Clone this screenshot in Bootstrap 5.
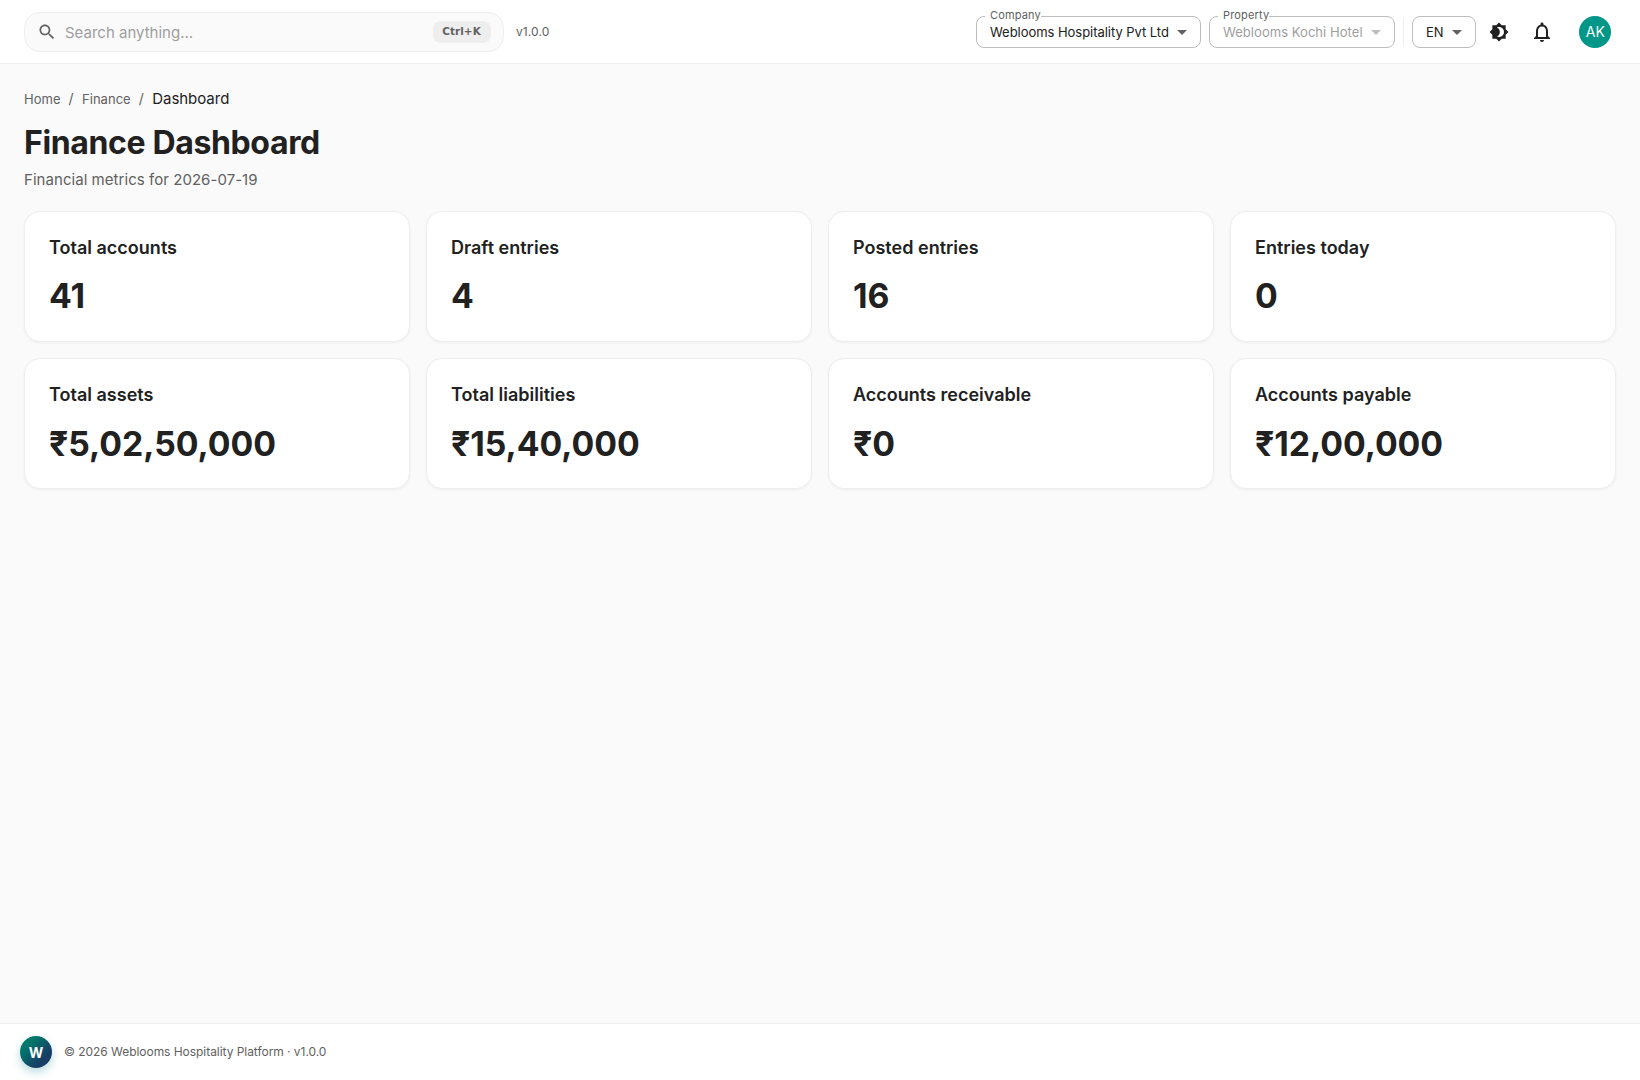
<!DOCTYPE html>
<html lang="en">
<head>
<meta charset="utf-8">
<meta name="viewport" content="width=device-width, initial-scale=1">
<title>Finance Dashboard</title>
<link rel="stylesheet" href="https://cdn.jsdelivr.net/npm/bootstrap@5.3.0/dist/css/bootstrap.min.css">
<style>
  body { font-family: Inter, sans-serif; background: #fafafa; color: #212121; font-size: 15px; }
  .topbar { height: 64px; border-bottom: 1px solid #eee; }
  .search-box { width: 480px; height: 40px; border: 1px solid #eee; border-radius: 16px; background: #fafafa; padding: 0 12px; }
  .search-input { font-size: 15px; line-height: 22px; padding-top: 2px; color: #9e9e9e; margin-left: 8px; }
  .search-box svg { fill: #616161; }
  .key-hint { font-family: "DejaVu Sans", sans-serif; font-size: 10.4px; letter-spacing: .1px; font-weight: 700; color: #616161; background: #eee; border-radius: 8px; width: 58px; height: 22px; line-height: 20px; padding-right: 1px; }
  .version-tag { font-size: 12px; letter-spacing: .1px; color: #616161; margin-left: 12px; }
  .select-field { height: 32px; border: 1px solid #bdbdbd; border-radius: 8px; padding: 0 10px 0 13px; font-size: 13px; color: #212121; }
  .select-field > span:not(.field-legend) { padding-top: 2px; }
  .select-field svg { fill: #616161; }
  .select-off { color: #9e9e9e; }
  .select-off svg { fill: #bdbdbd; }
  .field-legend { left: 8px; top: -10px; padding-left: 5px; height: 16px; line-height: 16px; font-size: 11px; letter-spacing: .15px; color: #616161; background: #fff; }
  .field-company { width: 225px; margin-right: 8px; letter-spacing: -.04px; }
  .field-property { width: 186px; margin-right: 8px; letter-spacing: .05px; }
  .field-lang { width: 64px; margin: 0 6px 0 8px; }
  .divider-v { width: 1px; height: 28px; background: #eee; }
  .tool-btn { width: 34px; height: 40px; margin-right: 6px; }
  .tool-btn svg { fill: #212121; }
  .bell-btn { width: 40px; height: 40px; margin-right: 17px; }
  .avatar { width: 32px; height: 32px; margin-right: 5px; background: #009688; color: #fff; font-size: 14px; letter-spacing: .2px; padding-left: 1px; }
  .page-body { padding: 24px 24px 0; }
  .crumbs { font-size: 13px; line-height: 22px; color: #616161; letter-spacing: .03px; }
  .crumbs .sep { font-size: 14px; padding-right: .4px; }
  .crumbs .here { font-size: 15px; color: #212121; letter-spacing: -.03px; }
  .page-title { font-size: 32px; line-height: 40px; font-weight: 700; letter-spacing: -0.36px; margin: 13px 0 6px; }
  .page-sub { font-size: 15px; line-height: 22px; letter-spacing: .05px; color: #616161; margin-bottom: 19.7px; }
  .metric { height: 131.4px; background: #fff; border: 1px solid #eee; border-radius: 16px; padding: 24px; box-shadow: 0 1px 3px rgba(0,0,0,.05); }
  .metric-label { font-size: 18px; line-height: 23px; font-weight: 600; letter-spacing: .01px; }
  .metric-value { font-size: 33.75px; line-height: 44px; font-weight: 700; margin-top: 15px; letter-spacing: -.04px; }
  .row .col:nth-child(n+5) .metric-value { margin-top: 15.6px; }
  .foot { height: 57px; border-top: 1px solid #eee; padding-left: 20px; font-size: 12px; letter-spacing: -.045px; color: #616161; }
  .logo-dot { width: 32px; height: 32px; background: linear-gradient(135deg, #00796b 0%, #00796b 25%, #173f66 70%, #173f66 100%); box-shadow: 0 4px 10px rgba(0,121,140,.28); color: #fff; font-size: 14px; font-weight: 700; margin-right: 12px; }
</style>
<script src="https://cdn.jsdelivr.net/npm/bootstrap@5.3.0/dist/js/bootstrap.bundle.min.js"></script>
</head>
<body class="d-flex flex-column vh-100 overflow-hidden">
<header class="topbar bg-white d-flex align-items-center px-4 flex-shrink-0">
  <div class="search-box d-flex align-items-center">
    <svg width="20" height="20" viewBox="0 0 24 24"><path d="M15.5 14h-.79l-.28-.27C15.41 12.59 16 11.11 16 9.5 16 5.91 13.09 3 9.5 3S3 5.91 3 9.5 5.91 16 9.5 16c1.61 0 3.09-.59 4.23-1.57l.27.28v.79l5 4.99L20.49 19l-4.99-5zm-6 0C7.01 14 5 11.99 5 9.5S7.01 5 9.5 5 14 7.01 14 9.5 11.99 14 9.5 14z"/></svg>
    <span class="search-input flex-grow-1">Search anything...</span>
    <span class="key-hint text-center">Ctrl+K</span>
  </div>
  <span class="version-tag">v1.0.0</span>
  <div class="d-flex align-items-center ms-auto">
    <div class="select-field field-company position-relative d-flex align-items-center justify-content-between">
      <span class="field-legend position-absolute">Company</span>
      <span class="text-nowrap">Weblooms Hospitality Pvt Ltd</span>
      <svg width="16" height="16" viewBox="4 4 16 16"><path d="M7 10l5 5 5-5z"/></svg>
    </div>
    <div class="select-field select-off field-property position-relative d-flex align-items-center justify-content-between">
      <span class="field-legend position-absolute">Property</span>
      <span class="text-nowrap">Weblooms Kochi Hotel</span>
      <svg width="16" height="16" viewBox="4 4 16 16"><path d="M7 10l5 5 5-5z"/></svg>
    </div>
    <div class="divider-v"></div>
    <div class="select-field field-lang d-flex align-items-center justify-content-between">
      <span>EN</span>
      <svg width="16" height="16" viewBox="4 4 16 16"><path d="M7 10l5 5 5-5z"/></svg>
    </div>
    <div class="tool-btn d-flex align-items-center justify-content-center">
      <svg width="20" height="20" viewBox="0 0 24 24"><path d="M20 8.69V4h-4.69L12 .69 8.69 4H4v4.69L.69 12 4 15.31V20h4.69L12 23.31 15.31 20H20v-4.69L23.31 12 20 8.69zM12 18c-.89 0-1.74-.2-2.5-.55C11.56 16.5 13 14.42 13 12s-1.44-4.5-3.5-5.45C10.26 6.2 11.11 6 12 6c3.31 0 6 2.69 6 6s-2.69 6-6 6z"/></svg>
    </div>
    <div class="tool-btn bell-btn d-flex align-items-center justify-content-center">
      <svg width="24" height="24" viewBox="0 0 24 24"><path d="M12 22c1.1 0 2-.9 2-2h-4c0 1.1.89 2 2 2zm6-6v-5c0-3.07-1.63-5.64-4.5-6.32V4c0-.83-.67-1.5-1.5-1.5s-1.5.67-1.5 1.5v.68C7.64 5.36 6 7.92 6 11v5l-2 2v1h16v-1l-2-2zm-2 1H8v-6c0-2.48 1.51-4.5 4-4.5s4 2.02 4 4.5v6z"/></svg>
    </div>
    <div class="avatar rounded-circle d-flex align-items-center justify-content-center">AK</div>
  </div>
</header>
<main class="page-body flex-grow-1">
  <nav class="crumbs d-flex align-items-center" aria-label="breadcrumb">
    <span>Home</span><span class="sep mx-2">/</span><span>Finance</span><span class="sep mx-2">/</span><span class="here">Dashboard</span>
  </nav>
  <h1 class="page-title">Finance Dashboard</h1>
  <p class="page-sub">Financial metrics for 2026-07-19</p>
  <div class="row row-cols-4 g-3">
    <div class="col"><div class="metric"><div class="metric-label">Total accounts</div><div class="metric-value">41</div></div></div>
    <div class="col"><div class="metric"><div class="metric-label">Draft entries</div><div class="metric-value">4</div></div></div>
    <div class="col"><div class="metric"><div class="metric-label">Posted entries</div><div class="metric-value">16</div></div></div>
    <div class="col"><div class="metric"><div class="metric-label">Entries today</div><div class="metric-value">0</div></div></div>
    <div class="col"><div class="metric"><div class="metric-label">Total assets</div><div class="metric-value">₹5,02,50,000</div></div></div>
    <div class="col"><div class="metric"><div class="metric-label">Total liabilities</div><div class="metric-value">₹15,40,000</div></div></div>
    <div class="col"><div class="metric"><div class="metric-label">Accounts receivable</div><div class="metric-value">₹0</div></div></div>
    <div class="col"><div class="metric"><div class="metric-label">Accounts payable</div><div class="metric-value">₹12,00,000</div></div></div>
  </div>
</main>
<footer class="foot bg-white d-flex align-items-center flex-shrink-0">
  <div class="logo-dot rounded-circle d-flex align-items-center justify-content-center">W</div>
  <span>© 2026 Weblooms Hospitality Platform · v1.0.0</span>
</footer>
</body>
</html>
